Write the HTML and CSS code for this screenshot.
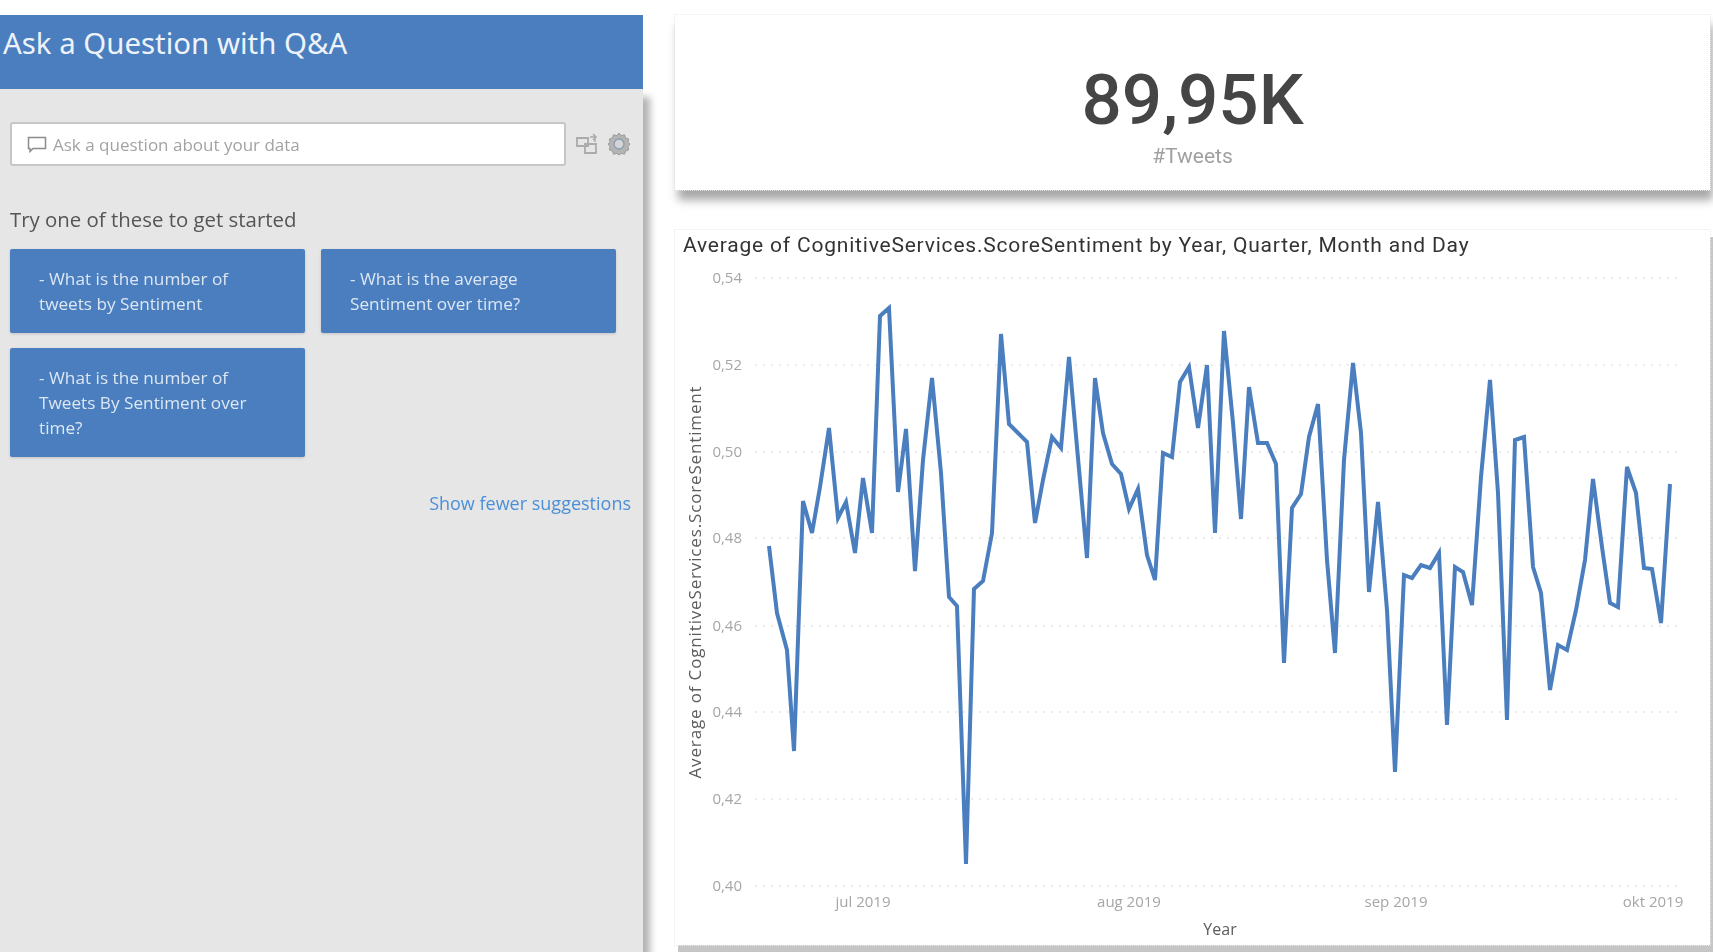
FILE: index.html
```html
<!DOCTYPE html>
<html lang="en">

<head>
    <meta charset="UTF-8">
    <meta name="viewport" content="width=device-width, initial-scale=1.0">
    <title>Tweets dashboard</title>
    <link rel="stylesheet" href="styles.css">
</head>

<body>
    <div class="page">
        <div class="qna">
            <h1 class="qnaTitle">Ask a Question with Q&amp;A</h1>
            <div class="qnaBody">
                <div class="askRow">
                    <div class="askBox">
                        <svg class="askIcon" width="20" height="17" viewBox="0 0 20 17">
                            <path d="M1.5 1.5h17v11H6l-3 3v-3H1.5z" fill="none" stroke="#8c8c8c" stroke-width="1.5"/>
                        </svg>
                        <span>Ask a question about your data</span>
                    </div>
                    <svg class="toolIcon" width="23" height="22" viewBox="0 0 23 22">
                        <path d="M1 5h11v8H1zM9 11h11v9H9z" fill="none" stroke="#ababab" stroke-width="1.8"/>
                        <path d="M14 4h5v5M17 1l3 3-3 3" fill="none" stroke="#ababab" stroke-width="1.5"/>
                    </svg>
                    <svg class="toolIcon" width="24" height="24" viewBox="0 0 24 24">
                        <path d="M12 1l2.2 2.6 3.3-.8 1 3.2 3.2 1-.8 3.3L23 12l-2.1 2.7.8 3.3-3.2 1-1 3.2-3.3-.8L12 23l-2.2-1.6-3.3.8-1-3.2-3.2-1 .8-3.3L1 12l2.1-1.7-.8-3.3 3.2-1 1-3.2 3.3.8z" fill="#b4b4b4" stroke="#9a9a9a"/>
                        <circle cx="12" cy="12" r="5" fill="#d4d4d4" stroke="#8c9fb5" stroke-width="1.5"/>
                    </svg>
                </div>
                <p class="tryText">Try one of these to get started</p>
                <div class="suggestions">
                    <div class="suggestion">- What is the number of<br>tweets by Sentiment</div>
                    <div class="suggestion">- What is the average<br>Sentiment over time?</div>
                    <div class="suggestion">- What is the number of<br>Tweets By Sentiment over<br>time?</div>
                </div>
                <a class="fewer">Show fewer suggestions</a>
            </div>
        </div>

        <div class="reports">
            <div class="card kpi">
                <div class="kpiValue">89,95K</div>
                <div class="kpiLabel">#Tweets</div>
            </div>

            <div class="card chart">
                <h2 class="chartTitle">Average of CognitiveServices.ScoreSentiment by Year, Quarter, Month and Day</h2>
                <!-- viewBox uses page coordinates, easier to read points off the picture -->
                <svg class="plot" viewBox="675 262 1035 683" width="1035" height="683">
                    <g class="grid">
                        <line x1="755" x2="1682" y1="278" y2="278"/>
                        <line x1="755" x2="1682" y1="365" y2="365"/>
                        <line x1="755" x2="1682" y1="452" y2="452"/>
                        <line x1="755" x2="1682" y1="538" y2="538"/>
                        <line x1="755" x2="1682" y1="626" y2="626"/>
                        <line x1="755" x2="1682" y1="712" y2="712"/>
                        <line x1="755" x2="1682" y1="799" y2="799"/>
                        <line x1="755" x2="1682" y1="886" y2="886"/>
                    </g>
                    <g class="yLabels">
                        <text x="742" y="277">0,54</text>
                        <text x="742" y="364">0,52</text>
                        <text x="742" y="451">0,50</text>
                        <text x="742" y="537">0,48</text>
                        <text x="742" y="625">0,46</text>
                        <text x="742" y="711">0,44</text>
                        <text x="742" y="798">0,42</text>
                        <text x="742" y="885">0,40</text>
                    </g>
                    <g class="xLabels">
                        <text x="863" y="901">jul 2019</text>
                        <text x="1129" y="901">aug 2019</text>
                        <text x="1396" y="901">sep 2019</text>
                        <text x="1653" y="901">okt 2019</text>
                    </g>
                    <text class="axisTitle" x="1220" y="929">Year</text>
                    <text class="axisTitle axisTitleY" transform="translate(694 582) rotate(-90)">Average of CognitiveServices.ScoreSentiment</text>
                    <polyline class="line" points="769,546 777,613 787,650 794,751 803,501 812,533 820,487 829,428 838,518 846,502 855,553 863,478 872,533 880,316 889,308 898,492 906,429 915,571 923,460 932,378 941,473 949,597 957,606 966,864 974,589 983,581 992,533 1001,334 1009,424 1018,433 1027,442 1035,523 1043,480 1052,437 1061,448 1069,357 1077,447 1087,558 1095,378 1103,433 1112,464 1121,474 1129,509 1138,489 1147,555 1155,580 1163,453 1172,457 1180,382 1189,367 1198,428 1207,365 1215,533 1224,331 1233,423 1241,519 1249,387 1258,443 1267,443 1276,464 1284,663 1292,508 1301,494 1309,437 1318,404 1327,560 1335,653 1344,460 1353,363 1361,433 1369,592 1378,502 1387,610 1395,772 1404,575 1412,578 1421,565 1430,568 1439,553 1447,725 1455,567 1463,572 1472,605 1481,477 1490,380 1498,493 1507,720 1515,440 1524,437 1533,567 1541,593 1550,690 1558,645 1567,650 1576,610 1585,560 1593,479 1602,547 1610,603 1618,607 1627,467 1636,493 1644,568 1652,569 1661,623 1670,484"/>
                </svg>
            </div>
        </div>
    </div>
</body>

</html>
```

FILE: styles.css
```css
html, body {
    margin: 0;
    height: 100%;
    background-color: white;
    overflow: hidden;
}

.page {
    display: flex;
    height: 952px;
    box-sizing: border-box;
    padding-top: 15px;
    font-family: "Open Sans", sans-serif;
    filter: blur(0.6px);
}

/* left panel */
.qna {
    width: 643px;
    flex-shrink: 0;
    display: flex;
    flex-direction: column;
}

.qnaTitle {
    margin: 0;
    height: 74px;
    box-sizing: border-box;
    padding: 9px 0 0 3px;
    background-color: #4a7ebf;
    color: #eef3f9;
    font-family: "Noto Sans", sans-serif;
    font-size: 29.4px;
    font-weight: 400;
    line-height: 38px;
}

.qnaBody {
    flex: 1;
    display: flex;
    flex-direction: column;
    padding: 33px 12px 0 10px;
    background-color: #e6e6e6;
    box-shadow: 7px 8px 7px rgba(0, 0, 0, 0.3);
}

.askRow {
    display: flex;
    align-items: center;
}

.askBox {
    width: 556px;
    height: 44px;
    flex-shrink: 0;
    box-sizing: border-box;
    display: flex;
    align-items: center;
    gap: 6px;
    padding-left: 15px;
    background-color: white;
    border: 2px solid #c6c6c6;
    border-radius: 3px;
    color: #a3a3a3;
    font-size: 17px;
}

.toolIcon {
    margin-left: 10px;
}

.toolIcon + .toolIcon {
    margin-left: 8px;
}

.tryText {
    margin: 40px 0 17px;
    color: #555;
    font-size: 20.4px;
    line-height: 26px;
}

.suggestions {
    display: grid;
    grid-template-columns: 295px 295px;
    column-gap: 16px;
    row-gap: 15px;
    align-items: start;
}

.suggestion {
    padding: 17px 10px 17px 29px;
    background-color: #4a7ebf;
    border-radius: 2px;
    color: #dde7f3;
    font-size: 17.2px;
    line-height: 25px;
    box-shadow: 0 1px 3px rgba(0, 0, 0, 0.15);
}

.fewer {
    align-self: flex-end;
    margin-top: 33px;
    color: #4b8fd6;
    font-size: 18px;
    line-height: 26px;
}

/* right side */
.reports {
    flex: 1;
    display: flex;
    flex-direction: column;
    gap: 40px;
    padding: 0 3px 7px 32px;
    min-width: 0;
}

.card {
    background-color: white;
    outline: 1px dotted #e8e8e8;
}

.kpi {
    height: 175px;
    display: flex;
    flex-direction: column;
    align-items: center;
    box-shadow: 3px 10px 9px rgba(0, 0, 0, 0.35);
    font-family: Roboto, sans-serif;
}

.kpiValue {
    margin-top: 39px;
    color: #454545;
    font-size: 71px;
    font-weight: 500;
    line-height: 92px;
}

.kpiLabel {
    margin-top: -5px;
    color: #a0a0a0;
    font-size: 21px;
    line-height: 30px;
}

.chart {
    flex: 1;
    display: flex;
    flex-direction: column;
    box-shadow: 3px 7px 0 #c6c6c6;
    min-height: 0;
}

.chartTitle {
    margin: 0;
    height: 32px;
    padding-left: 8px;
    color: #333;
    font-family: Roboto, sans-serif;
    font-size: 21px;
    font-weight: 400;
    letter-spacing: 0.8px;
    line-height: 30px;
    white-space: nowrap;
}

.plot {
    display: block;
}

.grid line {
    stroke: #d9d9d9;
    stroke-width: 1;
    stroke-dasharray: 2 6;
}

.yLabels text {
    fill: #a6a6a6;
    font-size: 15px;
    text-anchor: end;
    dominant-baseline: central;
}

.xLabels text {
    fill: #a6a6a6;
    font-size: 15px;
    text-anchor: middle;
    dominant-baseline: central;
}

.axisTitle {
    fill: #5c5c5c;
    font-size: 16px;
    text-anchor: middle;
    dominant-baseline: central;
}

.axisTitleY {
    font-size: 17px;
    letter-spacing: 0.85px;
}

.line {
    fill: none;
    stroke: #4a7ebf;
    stroke-width: 4;
    stroke-linejoin: miter;
}
```
